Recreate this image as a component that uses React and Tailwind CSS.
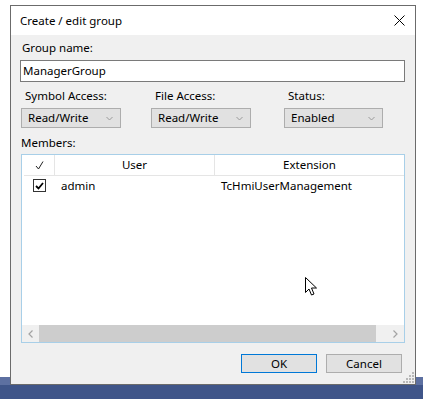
import React from "react";

const font = { fontFamily: '"Noto Sans", "Liberation Sans", sans-serif' };

function Chevron() {
  return (
    <svg width="7" height="5" viewBox="0 0 7 5" className="shrink-0">
      <path d="M0.5 1 L3.5 4 L6.5 1" fill="none" stroke="#9a9a9a" strokeWidth="1" />
    </svg>
  );
}

function Select({ value, w }) {
  return (
    <div className={`${w} h-[20px] bg-[#e1e1e1] border border-[#adadad] flex items-center justify-between pl-[6px] pr-[7px] text-[11.5px] leading-none`}>
      <span>{value}</span>
      <Chevron />
    </div>
  );
}

export default function App() {
  return (
    <div className="relative w-[423px] h-[399px] bg-white overflow-hidden text-black" style={font}>
      {/* taskbar */}
      <div className="absolute left-0 right-0 top-[377px] h-[8px] bg-[#5d70a1]" />
      <div className="absolute left-0 right-0 top-[385px] bottom-0 bg-[#3f5589]" />

      {/* dialog window */}
      <div className="absolute left-[10px] top-[5px] w-[406px] h-[380px] border border-[#6b6b6b] bg-[#f0f0f0] flex flex-col">
        <div className="h-[29px] bg-white flex items-center justify-between pl-[9px] pr-[10px] shrink-0">
          <span className="text-[11.5px] leading-none pt-[1px]">Create / edit group</span>
          <svg width="11" height="11" viewBox="0 0 11 11">
            <path d="M0.5 0.5 L10.5 10.5 M10.5 0.5 L0.5 10.5" stroke="#000" strokeWidth="1" />
          </svg>
        </div>

        <div className="flex-1 flex flex-col pl-[9px] pr-[10px] relative">
          <div className="text-[11.5px] leading-[16px] mt-[5px] pl-[2px]">Group name:</div>
          <div className="mt-[4px] h-[22px] bg-white border border-[#7a7a7a] flex items-center pl-[2px] text-[11.5px] leading-none">
            ManagerGroup
          </div>

          <div className="flex mt-[6px]">
            <div className="w-[131px] pl-[1px]">
              <div className="text-[11.5px] leading-[16px] pl-[4px]">Symbol Access:</div>
              <div className="mt-[4px]"><Select value="Read/Write" w="w-[100px]" /></div>
            </div>
            <div className="w-[133px]">
              <div className="text-[11.5px] leading-[16px] pl-[4px]">File Access:</div>
              <div className="mt-[4px]"><Select value="Read/Write" w="w-[100px]" /></div>
            </div>
            <div className="flex-1">
              <div className="text-[11.5px] leading-[16px] pl-[4px]">Status:</div>
              <div className="mt-[4px]"><Select value="Enabled" w="w-[99px]" /></div>
            </div>
          </div>

          <div className="text-[11.5px] leading-[16px] mt-[7px] pl-[1px]">Members:</div>

          <div className="mt-[3px] ml-[1px] w-[384px] h-[189px] border border-[#a8cfe8] bg-white flex flex-col">
            <div className="h-[21px] flex border-b border-[#e5e5e5] text-[11.5px] leading-none shrink-0 ml-[2px]">
              <div className="w-[31px] border-r border-[#e5e5e5] flex items-center justify-center">
                <svg width="9" height="9" viewBox="0 0 9 9">
                  <path d="M1 5 L3.5 8 L8 0.5" fill="none" stroke="#222" strokeWidth="1" />
                </svg>
              </div>
              <div className="w-[160px] border-r border-[#e5e5e5] flex items-center justify-center">User</div>
              <div className="flex-1 flex items-center justify-center">Extension</div>
            </div>
            <div className="h-[19px] flex items-center text-[11.5px] leading-none shrink-0">
              <div className="w-[24px] flex justify-end">
                <div className="w-[13px] h-[13px] border border-[#333] bg-white flex items-center justify-center">
                  <svg width="9" height="8" viewBox="0 0 9 8">
                    <path d="M1 4 L3.5 6.5 L8 1" fill="none" stroke="#000" strokeWidth="1.8" />
                  </svg>
                </div>
              </div>
              <div className="w-[175px] pl-[15px]">admin</div>
              <div className="flex-1">TcHmiUserManagement</div>
            </div>
            <div className="flex-1" />
            <div className="h-[17px] flex bg-[#f0f0f0] shrink-0">
              <div className="w-[17px] flex items-center justify-center">
                <svg width="5" height="8" viewBox="0 0 5 8">
                  <path d="M4.5 0.5 L1 4 L4.5 7.5" fill="none" stroke="#a3a3a3" strokeWidth="1.2" />
                </svg>
              </div>
              <div className="w-[337px] bg-[#cdcdcd]" />
              <div className="flex-1 flex items-center justify-end pr-[6px]">
                <svg width="5" height="8" viewBox="0 0 5 8">
                  <path d="M0.5 0.5 L4 4 L0.5 7.5" fill="none" stroke="#a3a3a3" strokeWidth="1.2" />
                </svg>
              </div>
            </div>
          </div>

          <div className="flex justify-end gap-[9px] mt-[11px] pr-[3px]">
            <div className="w-[76px] h-[19px] bg-[#e1e1e1] border border-[#0078d7] flex items-center justify-center text-[11.5px] leading-none">OK</div>
            <div className="w-[76px] h-[19px] bg-[#e1e1e1] border border-[#adadad] flex items-center justify-center text-[11.5px] leading-none">Cancel</div>
          </div>

          {/* size grip */}
          <svg className="absolute right-[1px] bottom-[1px]" width="11" height="11" viewBox="0 0 11 11">
            {[[9,1],[9,4],[6,4],[9,7],[6,7],[3,7],[9,10],[6,10],[3,10],[0,10]].map(([x,y],i)=>(
              <rect key={i} x={x} y={y-1} width="2" height="2" fill="#b8b8b8" />
            ))}
          </svg>
        </div>
      </div>

      {/* mouse cursor */}
      <svg className="absolute left-[305px] top-[277px]" width="14" height="20" viewBox="0 0 14 20">
        <path d="M0.5 0.5 L0.5 15.5 L4 12 L6.5 18 L9 17 L6.5 11 L11.5 11 Z" fill="#fff" stroke="#000" strokeWidth="1" strokeLinejoin="miter" />
      </svg>
    </div>
  );
}
